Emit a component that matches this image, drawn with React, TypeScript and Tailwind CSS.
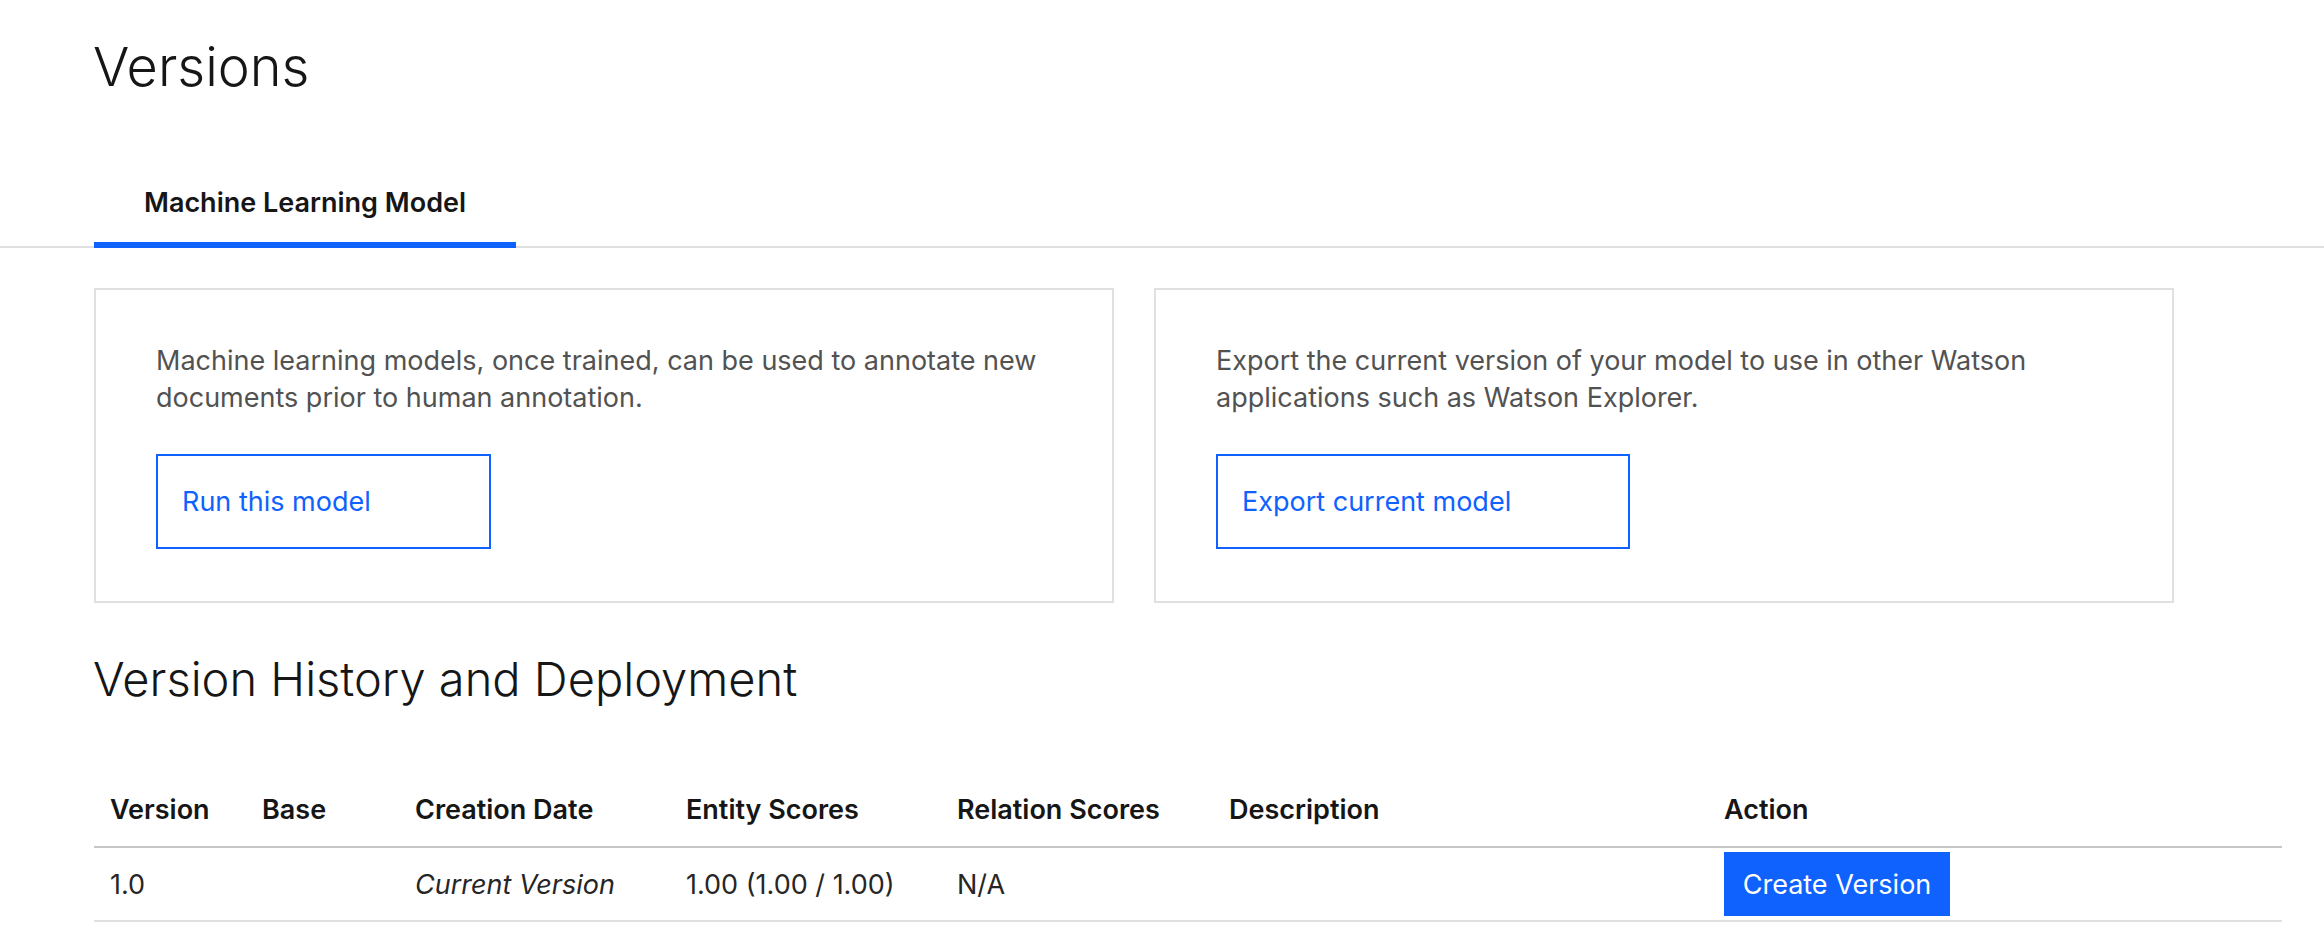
const font = { fontFamily: "Inter, 'Noto Sans', sans-serif" };

type Row = { version: string; base: string; created: string; entity: string; relation: string; description: string };

const rows: Row[] = [
  { version: "1.0", base: "", created: "Current Version", entity: "1.00 (1.00 / 1.00)", relation: "N/A", description: "" },
];

function InfoCard({ text, action, buttonWidth }: { text: string[]; action: string; buttonWidth: string }) {
  return (
    <div className="w-[1020px] h-[315px] border-2 border-[#e0e0e0] px-[60px] pt-[52px]">
      <p className="text-[27px] leading-[37px] text-[#525252]">
        {text[0]}
        <br />
        {text[1]}
      </p>
      <button className={`mt-[38px] h-[95px] ${buttonWidth} border-2 border-[#0f62fe] pl-[24px] pt-[2px] text-left text-[27px] text-[#0f62fe]`}>
        {action}
      </button>
    </div>
  );
}

export default function App() {
  return (
    <div className="w-[2324px] h-[948px] overflow-hidden bg-white text-[#161616]" style={font}>
      <h1 className="pl-[93px] pt-[40px] text-[54px] leading-[54px] font-light">Versions</h1>

      <div className="mt-[74px] border-b-2 border-[#e0e0e0] pl-[94px] flex">
        <div className="w-[422px] -mb-[2px] border-b-[6px] border-[#0f62fe] pt-[16px] pb-[21px] text-center text-[27px] leading-[37px] font-semibold">
          Machine Learning Model
        </div>
      </div>

      <div className="mt-[40px] pl-[94px] flex gap-[40px]">
        <InfoCard
          text={["Machine learning models, once trained, can be used to annotate new", "documents prior to human annotation."]}
          action="Run this model"
          buttonWidth="w-[335px]"
        />
        <InfoCard
          text={["Export the current version of your model to use in other Watson", "applications such as Watson Explorer."]}
          action="Export current model"
          buttonWidth="w-[414px]"
        />
      </div>

      <h2 className="mt-[48px] pl-[93px] text-[47px] leading-[56px] font-light">Version History and Deployment</h2>

      <div className="mt-[66px] pl-[94px]">
        <table className="w-[2188px] table-fixed border-collapse text-[27px] leading-[37px]">
          <colgroup>
            <col className="w-[152px]" />
            <col className="w-[153px]" />
            <col className="w-[271px]" />
            <col className="w-[271px]" />
            <col className="w-[272px]" />
            <col className="w-[495px]" />
            <col />
          </colgroup>
          <thead>
            <tr className="h-[74px] border-b-2 border-[#c6c6c6] text-left">
              <th className="px-4 font-semibold">Version</th>
              <th className="px-4 font-semibold">Base</th>
              <th className="px-4 font-semibold">Creation Date</th>
              <th className="px-4 font-semibold">Entity Scores</th>
              <th className="px-4 font-semibold">Relation Scores</th>
              <th className="px-4 font-semibold">Description</th>
              <th className="px-4 font-semibold">Action</th>
            </tr>
          </thead>
          <tbody>
            {rows.map((r) => (
              <tr key={r.version} className="h-[74px] border-b-2 border-[#e0e0e0] text-[#262626]">
                <td className="px-4">{r.version}</td>
                <td className="px-4">{r.base}</td>
                <td className="px-4 italic">{r.created}</td>
                <td className="px-4">{r.entity}</td>
                <td className="px-4">{r.relation}</td>
                <td className="px-4">{r.description}</td>
                <td className="px-4">
                  <button className="h-[64px] w-[226px] bg-[#0f62fe] text-white text-[27px]">Create Version</button>
                </td>
              </tr>
            ))}
          </tbody>
        </table>
      </div>
    </div>
  );
}
